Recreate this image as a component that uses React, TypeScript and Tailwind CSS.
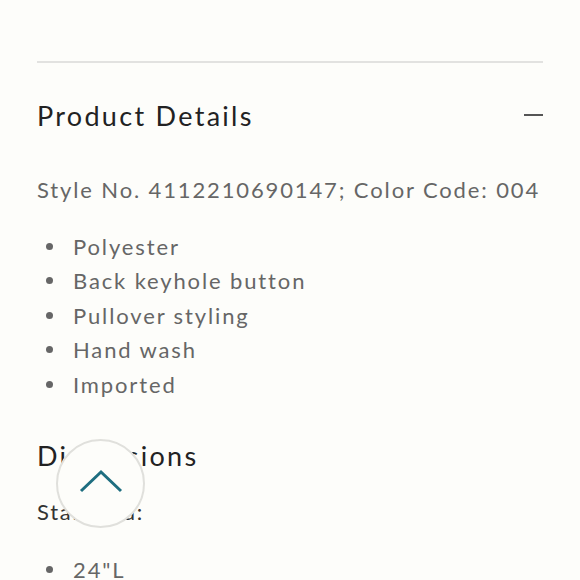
export default function App() {
  const items = ['Polyester', 'Back keyhole button', 'Pullover styling', 'Hand wash', 'Imported'];

  return (
    <div className="relative h-[580px] w-[580px] overflow-hidden bg-[#fdfdfa] font-['Lato','Noto_Sans',sans-serif]">
      <div className="px-[37px] pt-[61px]">
        <div className="h-[2px] bg-[#e2e2e0]" />

        <div className="mt-[33px] flex h-[38px] items-center justify-between">
          <h2 className="text-[27px] leading-none tracking-[0.085em] text-[#222]">Product Details</h2>
          <span className="h-[2px] w-[19px] bg-[#555]" />
        </div>

        <p className="mt-[39px] text-[22px] leading-[34px] tracking-[0.085em] text-[#666]">
          Style No. 4112210690147; Color Code: 004
        </p>

        <ul className="mt-[22px]">
          {items.map((item) => (
            <li key={item} className="flex h-[34.5px] items-center text-[22px] tracking-[0.085em] text-[#666]">
              <span className="ml-[9px] mr-[20px] h-[7px] w-[7px] rounded-full bg-[#666]" />
              {item}
            </li>
          ))}
        </ul>

        <h3 className="mt-[35px] text-[27px] leading-[38px] tracking-[0.085em] text-[#222]">Dimensions</h3>

        <p className="mt-[22px] text-[22px] leading-[30px] tracking-[0.08em] text-[#333]">Standard:</p>

        <ul className="mt-[26px]">
          <li className="flex h-[34px] items-center text-[22px] tracking-[0.085em] text-[#666]">
            <span className="ml-[9px] mr-[20px] h-[7px] w-[7px] rounded-full bg-[#666]" />
            24"L
          </li>
        </ul>
      </div>

      <button
        type="button"
        aria-label="Back to top"
        className="absolute left-[56px] top-[439px] flex h-[89px] w-[89px] items-center justify-center rounded-full border-2 border-[#e0e0dc] bg-[#fdfdfa]"
      >
        <svg width="44" height="24" viewBox="0 0 44 24" fill="none" className="-mt-[6px]">
          <path d="M2 22 L22 3 L42 22" stroke="#1e6e80" strokeWidth="3" />
        </svg>
      </button>
    </div>
  );
}
